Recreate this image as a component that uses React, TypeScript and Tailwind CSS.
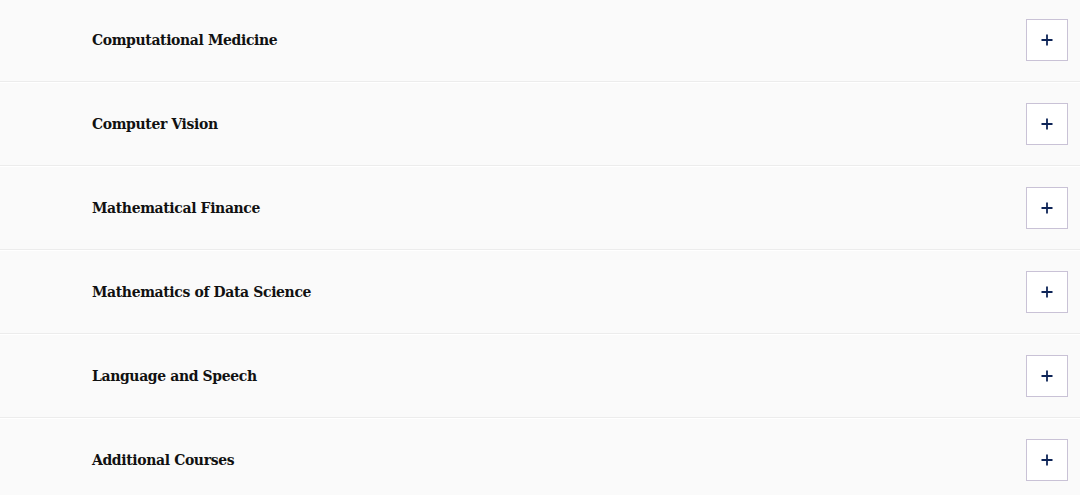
const items = [
  "Computational Medicine",
  "Computer Vision",
  "Mathematical Finance",
  "Mathematics of Data Science",
  "Language and Speech",
  "Additional Courses",
];

function PlusIcon() {
  return (
    <svg width="12" height="12" viewBox="0 0 12 12" fill="none">
      <path d="M6 0.5v11M0.5 6h11" stroke="#0e2558" strokeWidth="1.8" />
    </svg>
  );
}

export default function App() {
  return (
    <div className="w-[1080px] h-[495px] overflow-hidden bg-white">
      <div className="-mt-px">
        {items.map((title) => (
          <div
            key={title}
            className="h-[83px] mb-[1px] bg-[#fafafa] border-b border-[#ececec] flex items-center justify-between pl-[92px] pr-[12px]"
          >
            <h3
              className="text-[15.5px] font-bold text-[#111111] tracking-[-0.35px]"
              style={{ fontFamily: '"DejaVu Serif Condensed", "DejaVu Serif", serif' }}
            >
              {title}
            </h3>
            <button className="w-[42px] h-[42px] bg-white border border-[#c9c2d6] flex items-center justify-center">
              <PlusIcon />
            </button>
          </div>
        ))}
      </div>
    </div>
  );
}
